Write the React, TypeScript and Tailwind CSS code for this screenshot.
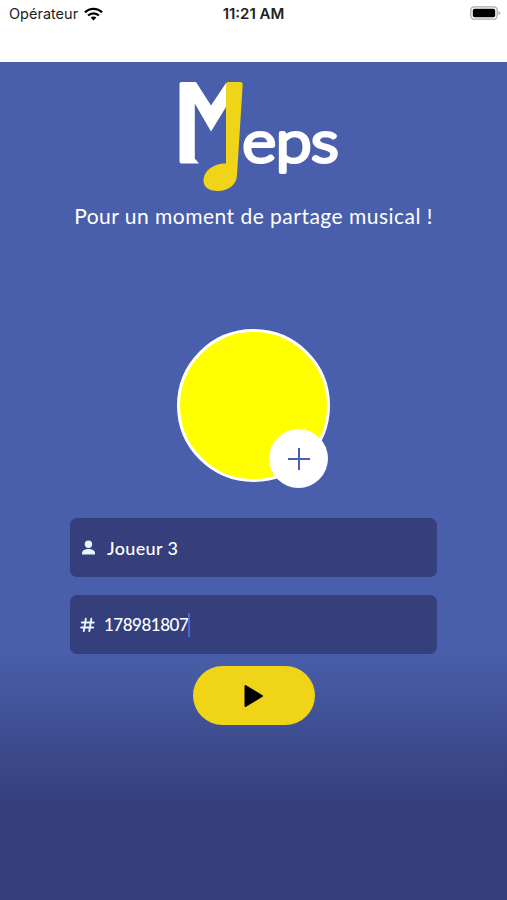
import { useState } from 'react';

export default function App() {
  const [name, setName] = useState('Joueur 3');

  return (
    <div className="flex h-[900px] w-[507px] flex-col overflow-hidden bg-white font-['Lato','Open_Sans',sans-serif]">
      <StatusBar />

      <main className="flex flex-1 flex-col items-center bg-linear-to-b from-[#4a5fab] from-70% to-[#343f7b] to-89% text-white">
        <Logo />
        <p className="mt-[9px] h-7 text-[21px] leading-7 font-normal tracking-[0.48px] whitespace-nowrap">
          Pour un moment de partage musical !
        </p>

        {/* Avatar */}
        <div className="relative mt-[99px] size-[153px] shrink-0 rounded-full border-[3px] border-white bg-[#ffff00]">
          <button
            className="absolute -right-px -bottom-[9px] flex size-[59px] items-center justify-center rounded-full bg-white text-[#4a5fab]"
            title="Choisir un avatar"
          >
            <PlusIcon />
          </button>
        </div>

        {/* Form */}
        <div className="mt-9 flex w-[367px] flex-col gap-[18px]">
          <label className="flex h-[59px] items-center rounded-[7px] bg-[#343f7b] pl-[11px]">
            <UserIcon />
            <input
              value={name}
              onChange={(e) => setName(e.target.value)}
              className="ml-[11px] w-[300px] bg-transparent text-[18px] leading-6 font-medium tracking-[0.35px] outline-none"
            />
          </label>
          <div className="flex h-[59px] items-center rounded-[7px] bg-[#343f7b] pl-[10px]">
            <HashIcon />
            <span className="ml-[9px] w-[84px] text-[17px] leading-6 font-medium tracking-[-0.5px] whitespace-nowrap">178981807</span>
            <span className="h-6 w-[2px] bg-[#4769e0]" />
          </div>
        </div>

        <button
          className="mt-3 flex h-[59px] w-[122px] items-center justify-center rounded-full bg-[#efd418] text-black"
          title="Jouer"
        >
          <PlayIcon />
        </button>
      </main>
    </div>
  );
}

function StatusBar() {
  return (
    <header className="grid h-[62px] shrink-0 grid-cols-3 items-start px-[9px] pr-[6px] pt-[4px] font-['Inter',sans-serif] text-[14.5px] leading-5 text-[#222]">
      <div className="flex items-center gap-[6px]">
        <span>Opérateur</span>
        <WifiIcon />
      </div>
      <span className="-ml-[3px] text-center text-[15px] font-semibold whitespace-nowrap">11:21 AM</span>
      <div className="flex h-[18px] items-center justify-end">
        <BatteryIcon />
      </div>
    </header>
  );
}

function Logo() {
  return (
    <svg className="mt-[18px] ml-[10px] shrink-0" width="162" height="113" viewBox="178 80 162 113">
      <path d="M181.500 82H196L211 105.500L226 83V107L211 131.500L194.800 103.500V158.500L199 163.500H181.500Q179.500 163.500 179.500 161.500V84Q179.500 82 181.500 82Z" fill="#fff" />
      <path d="M226 84Q226 82 228 82H240.500Q242.800 82 242.700 84.500L237 175C237 184 229 191 217.500 191C209 191 203.500 187 203.500 181C203.500 171 213 163.500 226 163.500Z" fill="#efd418" />
      <text
        x="242.500"
        y="161.500"
        textLength="96"
        lengthAdjust="spacingAndGlyphs"
        fill="#fff"
        stroke="#fff"
        strokeWidth="4.200"
        strokeLinejoin="round"
        className="font-['Lato',sans-serif] text-[57px] font-light"
      >
        eps
      </text>
    </svg>
  );
}

function WifiIcon() {
  return (
    <svg width="19" height="14" viewBox="0 0 19 14" fill="none" stroke="#000" strokeWidth="2.4">
      <path d="M1 5.300C5.700 0.700 13.300 0.700 18 5.300" />
      <path d="M4.100 8.500C7.100 5.600 11.900 5.600 14.900 8.500" />
      <path d="M9.500 13.500L6.600 10.600C8.200 9.200 10.800 9.200 12.400 10.600Z" fill="#000" stroke="none" />
    </svg>
  );
}

function BatteryIcon() {
  return (
    <svg width="31" height="14" viewBox="0 0 31 14">
      <rect x="0.800" y="0.800" width="26.400" height="12.400" rx="3.500" fill="#fff" stroke="#aaa" strokeWidth="1.300" />
      <rect x="2.800" y="2.800" width="22.400" height="8.400" rx="1.800" fill="#000" />
      <path d="M28.500 5V9Q30.300 8.500 30.300 7T28.500 5Z" fill="#aaa" />
    </svg>
  );
}

function PlusIcon() {
  return (
    <svg width="24" height="24" viewBox="0 0 24 24" fill="none" stroke="currentColor" strokeWidth="2">
      <path d="M12 1V23M1 12H23" />
    </svg>
  );
}

function UserIcon() {
  return (
    <svg width="15" height="16" viewBox="0 0 15 16" fill="#e8f4ff">
      <circle cx="7.500" cy="4.300" r="3.700" />
      <path d="M1 14.500V13C1 10.300 4.500 9 7.500 9S14 10.300 14 13V14.500Z" />
    </svg>
  );
}

function HashIcon() {
  return (
    <svg width="15" height="16" viewBox="0 0 15 16" fill="none" stroke="#e8f4ff" strokeWidth="1.900" strokeLinecap="round">
      <path d="M5.800 1.800L3.800 14.200M11.300 1.800L9.300 14.200M1.800 5.500H13.800M1.200 10.500H13.200" />
    </svg>
  );
}

function PlayIcon() {
  return (
    <svg width="20" height="24" viewBox="0 0 20 24" fill="currentColor" stroke="currentColor" strokeWidth="2" strokeLinejoin="round">
      <path d="M1.500 2L18 12L1.500 22Z" />
    </svg>
  );
}
